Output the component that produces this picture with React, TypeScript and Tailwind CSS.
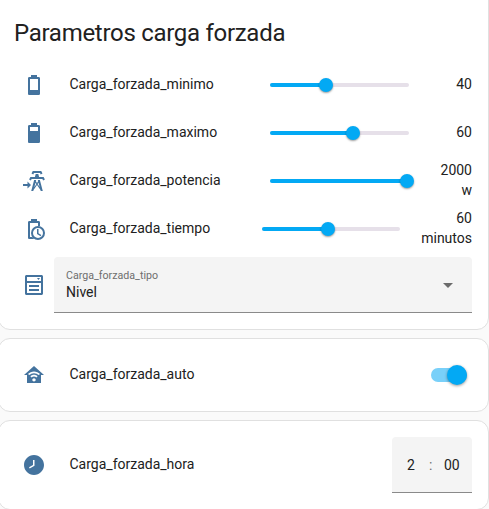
import React from "react";

const battery20 =
  "M16,17H8V6H16M16.67,4H15V2H9V4H7.33A1.33,1.33 0 0,0 6,5.33V20.67C6,21.4 6.6,22 7.33,22H16.67A1.33,1.33 0 0,0 18,20.67V5.33C18,4.6 17.4,4 16.67,4Z";
const battery70 =
  "M16,10H8V6H16M16.67,4H15V2H9V4H7.33A1.33,1.33 0 0,0 6,5.33V20.67C6,21.4 6.6,22 7.33,22H16.67A1.33,1.33 0 0,0 18,20.67V5.33C18,4.6 17.4,4 16.67,4Z";
const tower =
  "M8.28,5.45L6.5,4.55L7.76,2H16.23L17.5,4.55L15.72,5.44L15,4H9L8.28,5.45M18.62,8H14.09L13.3,5H10.7L9.91,8H5.38L4.1,10.55L5.89,11.44L6.62,10H17.38L18.1,11.45L19.89,10.56L18.62,8M17.77,22H15.7L15.46,21.1L12,15.9L8.53,21.1L8.3,22H6.23L9.12,11H11.19L10.83,12.35L12,14.1L13.16,12.35L12.81,11H14.88L17.77,22M11.4,15L10.5,13.65L9.32,18.13L11.4,15M14.68,18.12L13.5,13.64L12.6,15L14.68,18.12Z";
const homeAutomation =
  "M12,3L2,12H5V20H19V12H22L12,3M12,8.5C14.34,8.5 16.46,9.43 18,10.94L16.8,12.12C15.58,10.91 13.88,10.17 12,10.17C10.12,10.17 8.42,10.91 7.2,12.12L6,10.94C7.54,9.43 9.66,8.5 12,8.5M12,11.83C13.4,11.83 14.67,12.39 15.6,13.3L14.4,14.47C13.79,13.87 12.94,13.5 12,13.5C11.06,13.5 10.21,13.87 9.6,14.47L8.4,13.3C9.33,12.39 10.6,11.83 12,11.83M12,15.17C12.94,15.17 13.7,15.91 13.7,16.83C13.7,17.75 12.94,18.5 12,18.5C11.06,18.5 10.3,17.75 10.3,16.83C10.3,15.91 11.06,15.17 12,15.17Z";
const clockEight =
  "M12 2C6.5 2 2 6.5 2 12C2 17.5 6.5 22 12 22C17.5 22 22 17.5 22 12S17.5 2 12 2M12.5 12.8L7.7 15.6L7 14.2L11 11.9V7H12.5V12.8Z";

function Icon({ children }: { children: React.ReactNode }) {
  return (
    <div className="flex h-10 w-10 shrink-0 items-center justify-center">
      <svg viewBox="0 0 24 24" className="h-6 w-6 fill-[#44739e]">
        {children}
      </svg>
    </div>
  );
}

function Card({ className, children }: { className: string; children: React.ReactNode }) {
  return (
    <section className={`-ml-0.5 w-[491px] shrink-0 rounded-xl border border-[#e0e0e0] bg-white pr-4 pl-[15px] ${className}`}>
      {children}
    </section>
  );
}

function Name({ children }: { children: React.ReactNode }) {
  return <span className="ml-[15.5px] flex-1 pb-0.5 leading-5">{children}</span>;
}

function Slider({ percent, width }: { percent: number; width: string }) {
  return (
    <div className={`relative h-1 rounded-full bg-[#e6e0e9] ${width}`}>
      <div className="h-1 rounded-full bg-[#03a9f4]" style={{ width: `${percent}%` }} />
      <div
        className="absolute -top-[5px] -ml-[7px] h-3.5 w-3.5 rounded-full bg-[#03a9f4] shadow-[0_1px_2px_rgba(0,0,0,0.4)]"
        style={{ left: `${percent}%` }}
      />
    </div>
  );
}

function NumberRow(props: { icon: React.ReactNode; name: string; percent: number; value: string; wide?: boolean }) {
  return (
    <div className="flex h-10 items-center">
      <Icon>{props.icon}</Icon>
      <Name>{props.name}</Name>
      <Slider percent={props.percent} width={props.wide ? "w-[138px]" : "w-[139px]"} />
      <span className={`pb-0.5 text-right leading-5 ${props.wide ? "ml-4 w-14" : "ml-[23px] w-10"}`}>{props.value}</span>
    </div>
  );
}

export default function App() {
  return (
    <main className="flex h-[509px] w-[489px] flex-col gap-2 overflow-hidden bg-[#fafafa] font-['Roboto',sans-serif] text-sm text-[#212121]">
      <Card className="-mt-3 h-[342px]">
        <h1 className="h-[76px] pt-[20px] text-2xl leading-[48px] tracking-[-0.012em]">Parametros carga forzada</h1>
        <div className="flex flex-col gap-2">
          <NumberRow icon={<path d={battery20} />} name="Carga_forzada_minimo" percent={40.3} value="40" />
          <NumberRow icon={<path d={battery70} />} name="Carga_forzada_maximo" percent={59.7} value="60" />
          <NumberRow
            icon={
              <>
                <path d={tower} transform="translate(3 0)" />
                <path d="M5.5 12.5L9 16L5.5 19.5V17H1V15H5.5Z" />
              </>
            }
            name="Carga_forzada_potencia"
            percent={98.6}
            value="2000 w"
          />
          <NumberRow
            icon={
              <>
                <path d="M9 2H15V4H16.67C17.4 4 18 4.6 18 5.33V9.3L16 9V6H8V20H10.3C10.9 20.8 11.6 21.5 12.3 22H7.33C6.6 22 6 21.4 6 20.67V5.33C6 4.6 6.6 4 7.33 4H9Z" />
                <path fillRule="evenodd" d="M16 9A7 7 0 1 0 16 23A7 7 0 1 0 16 9ZM16 11A5 5 0 1 1 16 21A5 5 0 1 1 16 11Z" />
                <path d="M15 12H16.5V16.25L19.36 17.94L18.61 19.16L15 17Z" />
              </>
            }
            name="Carga_forzada_tiempo"
            percent={47.8}
            value="60 minutos"
            wide
          />
          <div className="flex items-center">
            <Icon>
              <path
                fillRule="evenodd"
                d="M4.5 2H19.5C20.3 2 21 2.7 21 3.5V20.5C21 21.3 20.3 22 19.5 22H4.5C3.7 22 3 21.3 3 20.5V3.5C3 2.7 3.7 2 4.5 2ZM5 4V8H19V4ZM5 10V20H19V10Z"
              />
              <path d="M15 5H18L16.5 7ZM7 12H17V14H7ZM7 16H17V18H7Z" />
            </Icon>
            <div className="flex h-14 flex-1 items-center justify-between rounded-t border-b border-[#8a8a8a] bg-[#f4f4f4] pr-[19px] pl-3">
              <div>
                <div className="text-[10.67px] leading-4 text-[#6e6e6e]">Carga_forzada_tipo</div>
                <div className="mb-px leading-4">Nivel</div>
              </div>
              <svg viewBox="0 0 10 5" className="mt-0.5 h-[5px] w-2.5 fill-[#6b6b6b]">
                <path d="M0 0H10L5 5Z" />
              </svg>
            </div>
          </div>
        </div>
      </Card>

      <Card className="flex h-[74px] items-center">
        <Icon>
          <path d={homeAutomation} />
        </Icon>
        <Name>Carga_forzada_auto</Name>
        <div className="mr-[5px] flex h-3.5 w-9 items-center justify-end rounded-full bg-[#79d0f9]">
          <div className="h-5 w-5 shrink-0 rounded-full bg-[#03a9f4] shadow-[0_1px_3px_rgba(0,0,0,0.4)]" />
        </div>
      </Card>

      <Card className="flex h-[90px] items-center">
        <Icon>
          <path d={clockEight} />
        </Icon>
        <Name>Carga_forzada_hora</Name>
        <div className="flex h-14 w-20 items-center rounded-t border-b border-[#8a8a8a] bg-[#f4f4f4] pl-[15px]">
          <span className="w-[22px]">2</span>
          <span className="w-[15px] text-[#6e6e6e]">:</span>
          <span>00</span>
        </div>
      </Card>
    </main>
  );
}
